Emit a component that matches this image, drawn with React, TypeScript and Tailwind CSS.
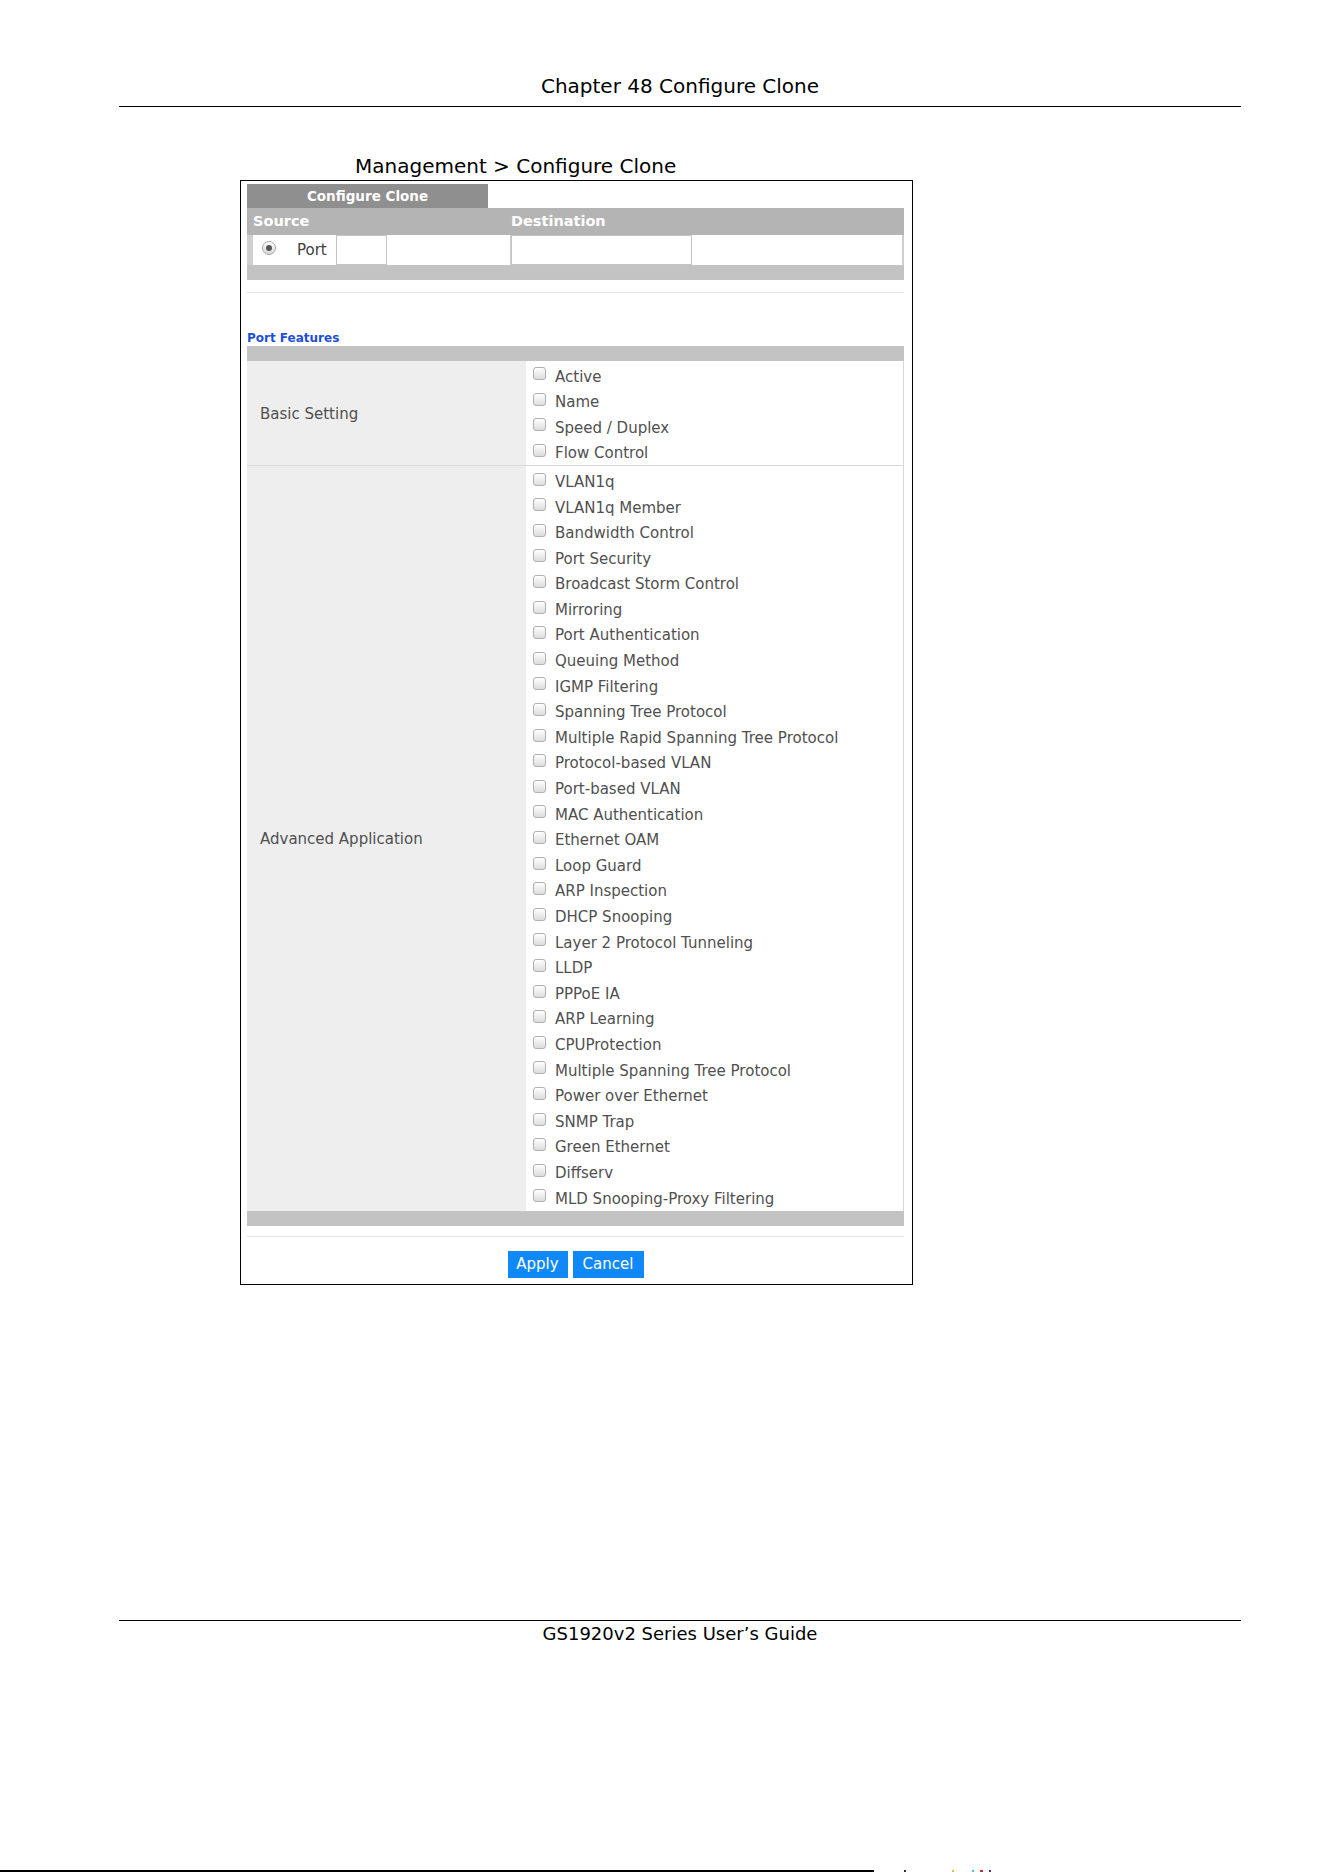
import React from 'react'

const basic = ['Active', 'Name', 'Speed / Duplex', 'Flow Control']

const advanced = [
  'VLAN1q',
  'VLAN1q Member',
  'Bandwidth Control',
  'Port Security',
  'Broadcast Storm Control',
  'Mirroring',
  'Port Authentication',
  'Queuing Method',
  'IGMP Filtering',
  'Spanning Tree Protocol',
  'Multiple Rapid Spanning Tree Protocol',
  'Protocol-based VLAN',
  'Port-based VLAN',
  'MAC Authentication',
  'Ethernet OAM',
  'Loop Guard',
  'ARP Inspection',
  'DHCP Snooping',
  'Layer 2 Protocol Tunneling',
  'LLDP',
  'PPPoE IA',
  'ARP Learning',
  'CPUProtection',
  'Multiple Spanning Tree Protocol',
  'Power over Ethernet',
  'SNMP Trap',
  'Green Ethernet',
  'Diffserv',
  'MLD Snooping-Proxy Filtering',
]

function Check({ label }: { label: string }) {
  return (
    <div className="flex items-center h-[25.6px] pt-[4px]">
      <span className="w-[13px] h-[13px] mb-[6px] rounded-[3px] border border-[#b0b0b0] bg-gradient-to-b from-white to-[#dcdcdc] shrink-0" />
      <span className="ml-[9px] text-[15px] text-[#505050] whitespace-nowrap">{label}</span>
    </div>
  )
}

function FeatureRow({ title, items }: { title: string; items: string[] }) {
  return (
    <div className="flex">
      <div className="w-[279px] bg-[#eeeeee] flex items-center pl-[13px] pt-[2px] text-[15px] text-[#505050]">
        {title}
      </div>
      <div className="flex-1 bg-white border-r border-[#d8d8d8] pl-[7px] py-[1px]">
        {items.map((it) => (
          <Check key={it} label={it} />
        ))}
      </div>
    </div>
  )
}

export default function App() {
  return (
    <div
      className="relative w-[1324px] h-[1872px] bg-white overflow-hidden text-black"
      style={{ fontFamily: '"DejaVu Sans", "Liberation Sans", sans-serif' }}
    >
      {/* page header */}
      <div className="ml-[119px] w-[1122px] pt-[74px] pb-[8px] border-b border-black text-center text-[20px] leading-[24px]">
        Chapter 48 Configure Clone
      </div>

      <div className="ml-[355px] mt-[47px] text-[20px] leading-[24px]">Management &gt; Configure Clone</div>

      {/* screen */}
      <div className="ml-[240px] mt-[2px] w-[673px] border border-black pt-[3px] pl-[6px] pr-[8px] pb-[6px]">
        <div className="w-[241px] h-[24px] bg-[#8f8f8f] flex items-center justify-center text-white font-bold text-[13.5px]">
          Configure Clone
        </div>
        <div className="h-[27px] bg-[#b4b4b4] flex items-center text-white font-bold text-[14.5px]">
          <div className="w-[264px] pl-[6px]">Source</div>
          <div>Destination</div>
        </div>
        <div className="h-[30px] bg-[#cfcfcf] flex pl-[6px] pr-[2px] gap-[1px]">
          <div className="w-[257px] bg-white flex items-center">
            <span className="ml-[9px] w-[14px] h-[14px] rounded-full border border-[#a8a8a8] bg-gradient-to-b from-white to-[#d8d8d8] flex items-center justify-center mb-[4px]">
              <span className="w-[6px] h-[6px] rounded-full bg-[#555]" />
            </span>
            <span className="ml-[21px] text-[15px] text-[#404040]">Port</span>
            <span className="ml-[9px] w-[51px] h-full border border-[#c4c4c4] bg-white" />
          </div>
          <div className="flex-1 bg-white flex">
            <span className="w-[181px] h-full border border-[#c4c4c4]" />
          </div>
        </div>
        <div className="h-[15px] bg-[#c3c3c3]" />

        <div className="mt-[12px] h-px bg-[#e2e2e2]" />

        <div className="mt-[37px] h-[16px] leading-[16px] text-[12px] font-bold text-[#1f4fd8]">Port Features</div>
        <div className="h-[15px] bg-[#c3c3c3]" />

        <FeatureRow title="Basic Setting" items={basic} />
        <div className="h-px bg-[#dadada]" />
        <FeatureRow title="Advanced Application" items={advanced} />

        <div className="h-[15px] bg-[#c3c3c3]" />
        <div className="mt-[10px] h-px bg-[#e6e6e6]" />

        <div className="mt-[14px] flex justify-center gap-[5px]">
          <button className="w-[60px] h-[27px] bg-[#1088f5] text-white text-[15px]">Apply</button>
          <button className="w-[71px] h-[27px] bg-[#1088f5] text-white text-[15px]">Cancel</button>
        </div>
      </div>

      {/* page footer */}
      <div className="ml-[119px] mt-[335px] w-[1122px] border-t border-black pt-[2px] text-center text-[18px] leading-[22px]">
        GS1920v2 Series User&rsquo;s Guide
      </div>

      <div className="absolute left-0 bottom-0 flex items-end gap-[30px]">
        <div className="w-[874px] h-[2px] bg-black" />
        <div className="flex gap-[6px] h-[2px]">
          <span className="w-[2px] bg-[#2a2a60]" />
          <span className="w-[2px] bg-[#e0c040] ml-[40px]" />
          <span className="w-[2px] bg-[#40c0e0] ml-[12px]" />
          <span className="w-[3px] bg-[#c03040]" />
          <span className="w-[2px] bg-[#3040a0]" />
        </div>
      </div>
    </div>
  )
}
